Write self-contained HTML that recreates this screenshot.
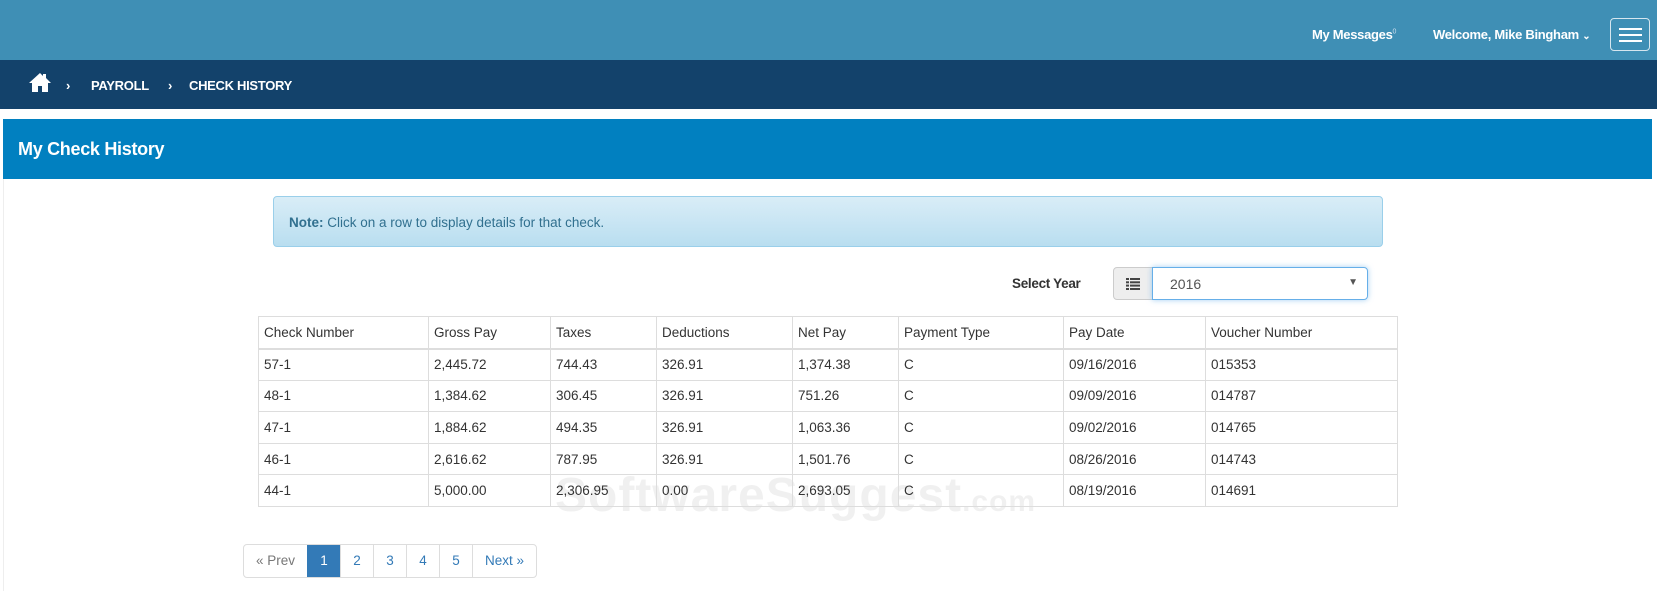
<!DOCTYPE html>
<html><head><meta charset="utf-8"><style>
*{box-sizing:border-box;margin:0;padding:0}
body{width:1657px;height:591px;overflow:hidden;background:#fff;font-family:"Liberation Sans",sans-serif;font-size:14px;color:#333;position:relative}
.top{position:absolute;left:0;top:0;width:1657px;height:60px;background:#3f8fb5}
.top .a{position:absolute;top:27px;color:#fff;font-size:13px;font-weight:bold;letter-spacing:-0.3px}
.ham{position:absolute;left:1610px;top:18px;width:40px;height:33px;border:1px solid #d6e6ef;border-radius:4px}
.ham i{position:absolute;left:8px;width:23px;height:2px;background:#fff}
.crumb{position:absolute;left:0;top:60px;width:1657px;height:49px;background:#13426b;color:#fff;font-size:13px;font-weight:bold;letter-spacing:-0.3px}
.crumb span{position:absolute;top:18px}
.title{position:absolute;left:3px;top:119px;width:1649px;height:60px;background:#0180c0;color:#fff;font-size:18px;font-weight:bold;padding:20px 0 0 15px;letter-spacing:-0.3px}
.side{position:absolute;left:3px;top:179px;width:1px;height:412px;background:#eee}
.note{position:absolute;left:273px;top:196px;width:1110px;height:51px;border:1px solid #9acfea;border-radius:4px;background:linear-gradient(#d9edf7,#b9def0);color:#31708f;padding:18px 15px;font-size:13.5px}
.sy{position:absolute;left:1012px;top:276px;font-weight:bold;font-size:13.5px;letter-spacing:-0.3px}
.ib{position:absolute;left:1113px;top:267px;width:40px;height:33px;background:#eee;border:1px solid #ccc;border-radius:4px 0 0 4px}
.sel{position:absolute;left:1152px;top:267px;width:216px;height:33px;border:1px solid #66afe9;border-radius:0 4px 4px 0;box-shadow:0 0 6px rgba(102,175,233,.6);padding:8px 0 0 17px;font-size:14px;color:#555}
.sel b{position:absolute;right:9px;top:9px;font-size:10px;color:#555}
table{position:absolute;left:258px;top:316px;width:1140px;border-collapse:collapse}
td,th{border:1px solid #ddd;height:31.6px;padding:0 5px;text-align:left;font-weight:normal;font-size:13.5px;color:#333}
th{border-bottom:2px solid #ddd;height:32px}
.pg{position:absolute;left:243px;top:544px;height:34px;display:flex;border:1px solid #ddd;border-radius:4px;overflow:hidden}
.pg div{height:32px;line-height:32px;padding:0;white-space:nowrap;border-left:1px solid #ddd;color:#337ab7;font-size:13.5px;text-align:center}
.pg div:first-child{border-left:0;color:#777}
.pg .on{background:#337ab7;color:#fff;border-color:#337ab7}
.wm{position:absolute;left:555px;top:468px;font-size:48px;font-weight:bold;color:rgba(0,0,0,.06);letter-spacing:1px}
</style></head><body>
<div class="top">
<div class="a" style="left:1312px">My Messages<sup style="font-size:7px;font-weight:normal;color:#cde">0</sup></div>
<div class="a" style="left:1433px">Welcome, Mike Bingham <span style="font-size:10px">&#8964;</span></div>
<div class="ham"><i style="top:9px"></i><i style="top:15px"></i><i style="top:21px"></i></div>
</div>
<div class="crumb">
<svg style="position:absolute;left:28px;top:12px" width="24" height="21" viewBox="0 0 24 21"><path d="M12 1L1 11h3v9h6v-6h4v6h6v-9h3L18 6V2h-3v2z" fill="#fff"/></svg>
<span style="left:66px">&#8250;</span><span style="left:91px">PAYROLL</span><span style="left:168px">&#8250;</span><span style="left:189px">CHECK HISTORY</span>
</div>
<div class="title">My Check History</div>
<div class="side"></div>
<div class="note"><b>Note:</b> Click on a row to display details for that check.</div>
<div class="sy">Select Year</div>
<div class="ib"><svg style="position:absolute;left:12px;top:10px" width="14" height="12" viewBox="0 0 14 12" fill="#444"><rect x="0" y="0" width="3" height="2"/><rect x="4" y="0" width="10" height="2"/><rect x="0" y="3.3" width="3" height="2"/><rect x="4" y="3.3" width="10" height="2"/><rect x="0" y="6.6" width="3" height="2"/><rect x="4" y="6.6" width="10" height="2"/><rect x="0" y="10" width="3" height="2"/><rect x="4" y="10" width="10" height="2"/></svg></div>
<div class="sel">2016<b>&#9660;</b></div>
<div class="wm">SoftwareSuggest<span style="font-size:30px">.com</span></div>
<table>
<tr><th style="width:170px">Check Number</th><th style="width:122px">Gross Pay</th><th style="width:106px">Taxes</th><th style="width:136px">Deductions</th><th style="width:106px">Net Pay</th><th style="width:165px">Payment Type</th><th style="width:142px">Pay Date</th><th>Voucher Number</th></tr>
<tr><td>57-1</td><td>2,445.72</td><td>744.43</td><td>326.91</td><td>1,374.38</td><td>C</td><td>09/16/2016</td><td>015353</td></tr>
<tr><td>48-1</td><td>1,384.62</td><td>306.45</td><td>326.91</td><td>751.26</td><td>C</td><td>09/09/2016</td><td>014787</td></tr>
<tr><td>47-1</td><td>1,884.62</td><td>494.35</td><td>326.91</td><td>1,063.36</td><td>C</td><td>09/02/2016</td><td>014765</td></tr>
<tr><td>46-1</td><td>2,616.62</td><td>787.95</td><td>326.91</td><td>1,501.76</td><td>C</td><td>08/26/2016</td><td>014743</td></tr>
<tr><td>44-1</td><td>5,000.00</td><td>2,306.95</td><td>0.00</td><td>2,693.05</td><td>C</td><td>08/19/2016</td><td>014691</td></tr>
</table>
<div class="pg"><div style="width:63px">« Prev</div><div class="on" style="width:33px">1</div><div style="width:33px">2</div><div style="width:33px">3</div><div style="width:33px">4</div><div style="width:33px">5</div><div style="width:64px">Next »</div></div>
</body></html>
